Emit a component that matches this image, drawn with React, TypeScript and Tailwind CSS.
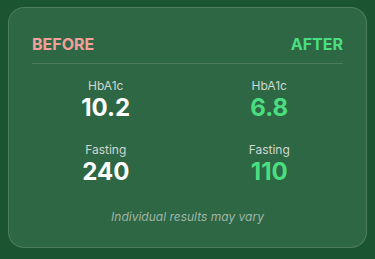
const stats = [
  { label: "HbA1c", before: "10.2", after: "6.8" },
  { label: "Fasting", before: "240", after: "110" },
];

export default function App() {
  return (
    <div className="min-h-screen bg-[#1a5431] px-2 pt-[7px] font-['Inter',sans-serif]">
      <div className="rounded-2xl border border-white/15 bg-[#2e6744] px-[23px] pt-6 pb-[22px]">
        {/* header */}
        <div className="flex items-center justify-between border-b border-white/15 pb-[7px] text-base leading-6 font-bold">
          <span className="text-[#f4a09a]">BEFORE</span>
          <span className="text-[#4ade80]">AFTER</span>
        </div>

        {/* stats */}
        <div className="mt-[14px] grid grid-cols-2 gap-x-4 gap-y-[20px]">
          {stats.map((s) => (
            <>
              <div key={s.label + "b"} className="flex flex-col items-center">
                <span className="text-xs leading-4 text-[#cfd8d2]">{s.label}</span>
                <span className="text-2xl leading-7 font-bold text-white">{s.before}</span>
              </div>
              <div key={s.label + "a"} className="flex flex-col items-center">
                <span className="text-xs leading-4 text-[#cfd8d2]">{s.label}</span>
                <span className="text-2xl leading-7 font-bold text-[#4ade80]">{s.after}</span>
              </div>
            </>
          ))}
        </div>

        {/* footer */}
        <p className="mt-[23px] text-center text-xs leading-4 italic text-[#9fb5a7]">
          Individual results may vary
        </p>
      </div>
    </div>
  );
}
